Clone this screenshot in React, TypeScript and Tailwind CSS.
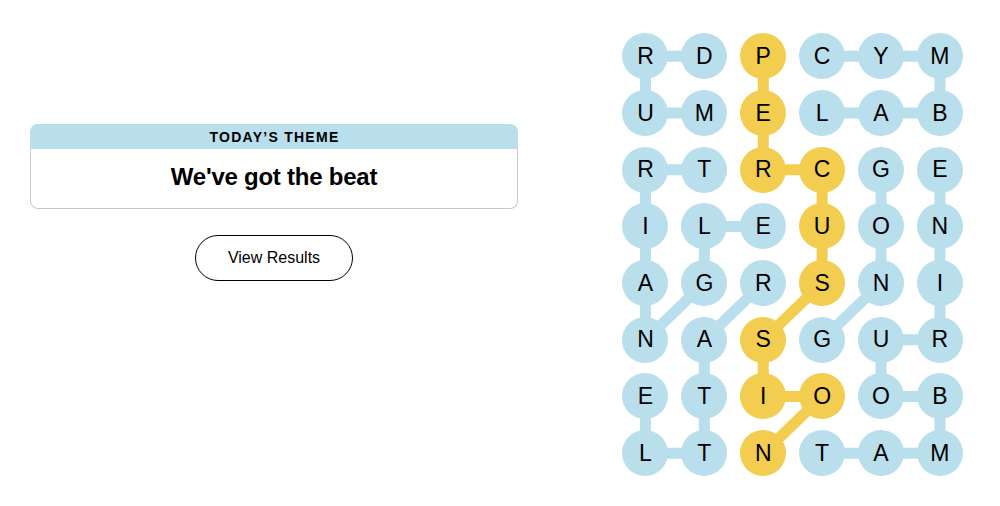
import React from "react";

const BLUE = "#b9deec";
const YELLOW = "#f2cd4f";
const CW = 58.9;
const CH = 56.7;

const rows = ["RDPCYM", "UMELAB", "RTRCGE", "ILEUON", "AGRSNI", "NASGUR", "ETIOOB", "LTNTAM"];

const spangram: [number, number][] = [
  [0, 2], [1, 2], [2, 2], [2, 3], [3, 3], [4, 3], [5, 2], [6, 2], [6, 3], [7, 2],
];

const paths: { cells: [number, number][]; yellow?: boolean }[] = [
  { cells: [[0, 1], [0, 0], [1, 0], [1, 1]] },
  { cells: [[2, 1], [2, 0], [3, 0], [4, 0], [5, 0], [4, 1], [3, 1], [3, 2]] },
  { cells: [[0, 3], [0, 4], [0, 5], [1, 5], [1, 4], [1, 3]] },
  { cells: spangram, yellow: true },
  { cells: [[2, 4], [3, 4], [4, 4], [5, 3]] },
  { cells: [[7, 3], [7, 4], [7, 5], [6, 5], [6, 4], [5, 4], [5, 5], [4, 5], [3, 5], [2, 5]] },
  { cells: [[4, 2], [5, 1], [6, 1], [7, 1], [7, 0], [6, 0]] },
];

const isSpan = (r: number, c: number) => spangram.some(([a, b]) => a === r && b === c);

export default function App() {
  return (
    <div
      className="w-[1000px] h-[506px] bg-white flex pl-[30px] pt-[28px]"
      style={{ fontFamily: '"Liberation Sans", Arial, sans-serif' }}
    >
      <div className="w-[488px] mt-[96px] flex flex-col items-center">
        <div className="w-full">
          <div className="h-[25px] bg-[#b9deec] rounded-t-lg flex items-center justify-center">
            <span className="text-[14px] font-bold tracking-[0.09em] text-black leading-none pl-[1px]">
              TODAY’S THEME
            </span>
          </div>
          <div className="h-[60px] border-x border-b border-[#c8c8c8] rounded-b-lg flex items-center justify-center pb-[4px]">
            <span className="text-[24px] font-bold text-black leading-none tracking-[-0.01em]">
              We've got the beat
            </span>
          </div>
        </div>
        <button className="mt-[26px] w-[158px] h-[46px] rounded-full border border-black bg-white text-[16px] text-black flex items-center justify-center">
          View Results
        </button>
      </div>

      <div className="ml-[98px] relative">
        <svg
          className="absolute left-0 top-0"
          width={CW * 6}
          height={CH * 8}
          viewBox={`0 0 ${CW * 6} ${CH * 8}`}
        >
          {paths.map((p, i) =>
            p.cells.slice(1).map(([r, c], j) => {
              const [pr, pc] = p.cells[j];
              return (
                <line
                  key={`${i}-${j}`}
                  x1={pc * CW + CW / 2}
                  y1={pr * CH + CH / 2}
                  x2={c * CW + CW / 2}
                  y2={r * CH + CH / 2}
                  stroke={p.yellow ? YELLOW : BLUE}
                  strokeWidth={11}
                />
              );
            })
          )}
        </svg>
        <div className="relative grid grid-cols-[repeat(6,58.9px)] grid-rows-[repeat(8,56.7px)]">
          {rows.map((row, r) =>
            row.split("").map((ch, c) => (
              <div key={`${r}-${c}`} className="flex items-center justify-center">
                <div
                  className={`w-[46px] h-[46px] rounded-full flex items-center justify-center text-[23px] text-black leading-none ${
                    isSpan(r, c) ? "bg-[#f2cd4f]" : "bg-[#b9deec]"
                  }`}
                >
                  {ch}
                </div>
              </div>
            ))
          )}
        </div>
      </div>
    </div>
  );
}
